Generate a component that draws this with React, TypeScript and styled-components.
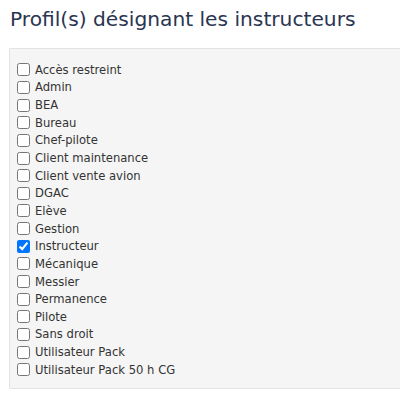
import React, {useState} from "react";
import styled, {createGlobalStyle} from "styled-components";

const GlobalStyle = createGlobalStyle`
    html, body {
        margin: 0;
        padding: 0;
        background: #ffffff;
        overflow: hidden;
    }
    body {
        font-family: "DejaVu Sans", Verdana, sans-serif;
        color: #333333;
    }
`;

const Page = styled.div`
    width: 400px;
    height: 402px;
    padding: 0 0 0 9px;
    box-sizing: border-box;
`;

const Title = styled.h3`
    margin: 0;
    padding: 7px 0 0 1px;
    font-size: 20.2px;
    font-weight: normal;
    line-height: 24px;
    color: #2a3550;
`;

const Well = styled.div`
    margin-top: 17px;
    box-sizing: border-box;
    background: #f5f5f5;
    border: 1px solid #e3e3e3;
    border-right: none;
    border-radius: 2px 0 0 2px;
    padding: 12px 8px 9px 7px;
`;

const List = styled.div`
    display: flex;
    flex-direction: column;
`;

const Option = styled.label`
    display: flex;
    align-items: center;
    gap: 5px;
    height: 17.65px;
    font-size: 11.6px;
    cursor: pointer;
`;

const Box = styled.input`
    width: 13px;
    height: 13px;
    margin: 0;
`;

const profiles = [
    "Accès restreint",
    "Admin",
    "BEA",
    "Bureau",
    "Chef-pilote",
    "Client maintenance",
    "Client vente avion",
    "DGAC",
    "Elève",
    "Gestion",
    "Instructeur",
    "Mécanique",
    "Messier",
    "Permanence",
    "Pilote",
    "Sans droit",
    "Utilisateur Pack",
    "Utilisateur Pack 50 h CG",
];

const App = (): JSX.Element => {
    const [checked, setChecked] = useState<string[]>(["Instructeur"]);
    const toggle = (name: string) =>
        setChecked(c => c.includes(name) ? c.filter(x => x !== name) : [...c, name]);
    return (
        <Page>
            <GlobalStyle/>
            <Title>Profil(s) désignant les instructeurs</Title>
            <Well>
                <List>
                    {profiles.map(p => (
                        <Option key={p}>
                            <Box type="checkbox" checked={checked.includes(p)} onChange={() => toggle(p)}/>
                            {p}
                        </Option>
                    ))}
                </List>
            </Well>
        </Page>
    );
}

export default App
